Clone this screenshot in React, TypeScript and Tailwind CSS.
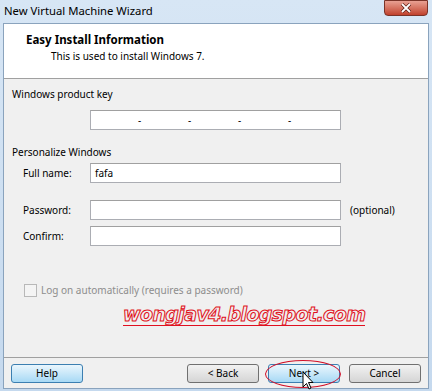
const font = "font-['Noto_Sans','Segoe_UI',sans-serif]";

const Field = ({ value = '' }: { value?: string }) => (
  <div className="h-[20px] w-[251px] border border-[#abadb3] border-t-[#a0a0a0] bg-white pl-[4px] text-[10px] leading-[18px] text-black">
    {value}
  </div>
);

const Button = ({ label, focused = false, ring = false }: { label: string; focused?: boolean; ring?: boolean }) => (
  <div
    className={
      'relative flex h-[19px] w-[72px] items-center justify-center rounded-[3px] border text-[10px] text-black ' +
      (focused
        ? 'border-[#3c7fb1] bg-gradient-to-b from-[#eaf6fd] to-[#a7d9f5]'
        : 'border-[#707070] bg-gradient-to-b from-[#f2f2f2] to-[#d5d5d5]')
    }
  >
    {label}
    {ring && (
      <div className="absolute left-[-4px] top-[-5px] h-[28px] w-[76px] rounded-[50%] border border-[#d0102a]" />
    )}
  </div>
);

export default function App() {
  return (
    <div className={`relative h-[391px] w-[432px] overflow-hidden bg-gradient-to-b from-[#d7e6f5] to-[#c5d9ee] ${font}`}>
      {/* title bar */}
      <div className="flex h-[23px] items-center justify-between pl-[4px] pr-[4px]">
        <span className="text-[11.3px] text-black">New Virtual Machine Wizard</span>
        <div className="mb-[7px] flex h-[16px] w-[44px] items-center justify-center rounded-b-[4px] border border-[#7a3328] bg-gradient-to-b from-[#e8a093] to-[#c0402c]">
          <svg width="12" height="10" viewBox="0 0 12 10">
            <path d="M2 1 L10 9 M10 1 L2 9" stroke="#5a1a12" strokeWidth="3.2" />
            <path d="M2 1 L10 9 M10 1 L2 9" stroke="#fff" strokeWidth="1.8" />
          </svg>
        </div>
      </div>

      <div className="mx-[3px] flex h-[366px] flex-col border border-[#8aa3bd] bg-[#f0f0f0]">
        {/* header */}
        <div className="h-[55px] border-b border-[#a0a0a0] bg-white pl-[22px] pt-[8px]">
          <div className="text-[11.5px] font-bold leading-[16px] text-black">Easy Install Information</div>
          <div className="pl-[25px] text-[10px] leading-[16px] text-black">This is used to install Windows 7.</div>
        </div>

        {/* body */}
        <div className="relative flex-1 pl-[8px] text-[10px] leading-[16px] text-black">
          <div className="pt-[7px]">Windows product key</div>
          <div className="ml-[78px] mt-[8px] flex h-[20px] w-[251px] items-center border border-[#abadb3] border-t-[#a0a0a0] bg-white pl-[47px]">
            <span className="w-[50px]">-</span>
            <span className="w-[50px]">-</span>
            <span className="w-[50px]">-</span>
            <span>-</span>
          </div>

          <div className="mt-[14px]">Personalize Windows</div>
          <div className="mt-[3px] flex items-center">
            <span className="w-[78px] pl-[11px]">Full name:</span>
            <Field value="fafa" />
          </div>
          <div className="mt-[17px] flex items-center">
            <span className="w-[78px] pl-[11px]">Password:</span>
            <Field />
            <span className="ml-[9px]">(optional)</span>
          </div>
          <div className="mt-[6px] flex items-center">
            <span className="w-[78px] pl-[11px]">Confirm:</span>
            <Field />
          </div>

          <div className="mt-[36px] flex items-center pl-[12px] text-[#8d8d8d]">
            <div className="h-[13px] w-[13px] border border-[#b8b8b8] bg-[#f4f4f4]" />
            <span className="ml-[4px]">Log on automatically (requires a password)</span>
          </div>

          <div className="ml-[111px] mt-[6px] w-max border-b border-[#e01020] font-['DejaVu_Sans',sans-serif] text-[19px] font-bold italic leading-[21px] tracking-[-0.6px] text-transparent [-webkit-text-stroke:1px_#e01020]">
            wongjav4.blogspot.com
          </div>
        </div>

        {/* footer */}
        <div className="flex h-[31px] items-center border-t border-[#a0a0a0] px-[7px]">
          <Button label="Help" focused />
          <div className="flex-1" />
          <Button label="< Back" />
          <div className="w-[9px]" />
          <Button label="Next >" focused ring />
          <div className="w-[9px]" />
          <Button label="Cancel" />
        </div>
      </div>

      {/* cursor */}
      <svg className="absolute left-[302px] top-[371px]" width="12" height="20" viewBox="0 0 12 20">
        <path d="M1 1 L1 16 L4.5 12.5 L7 18 L9 17 L6.5 11.5 L11 11.5 Z" fill="#fff" stroke="#000" strokeWidth="1" />
      </svg>
    </div>
  );
}
